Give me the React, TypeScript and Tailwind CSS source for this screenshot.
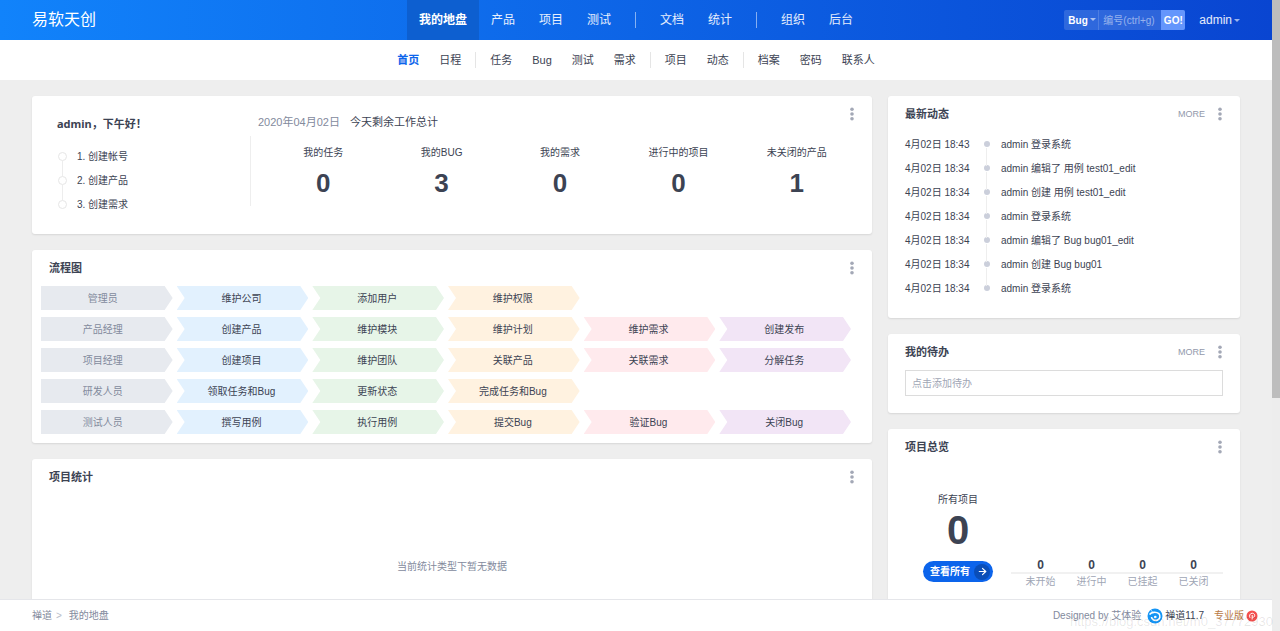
import { useState } from "react";
import type { ReactNode } from "react";
import { ArrowRight } from "lucide-react";
import clsx from "clsx";

const MAIN_NAV = [["我的地盘", "产品", "项目", "测试"], ["文档", "统计"], ["组织", "后台"]];
const SUB_NAV = [["首页", "日程"], ["任务", "Bug", "测试", "需求"], ["项目", "动态"], ["档案", "密码", "联系人"]];

const GUIDE = ["1. 创建帐号", "2. 创建产品", "3. 创建需求"];

const TOTALS = [
  { label: "我的任务", value: 0 },
  { label: "我的BUG", value: 3 },
  { label: "我的需求", value: 0 },
  { label: "进行中的项目", value: 0 },
  { label: "未关闭的产品", value: 1 },
];

const FLOW = [
  ["管理员", "维护公司", "添加用户", "维护权限"],
  ["产品经理", "创建产品", "维护模块", "维护计划", "维护需求", "创建发布"],
  ["项目经理", "创建项目", "维护团队", "关联产品", "关联需求", "分解任务"],
  ["研发人员", "领取任务和Bug", "更新状态", "完成任务和Bug"],
  ["测试人员", "撰写用例", "执行用例", "提交Bug", "验证Bug", "关闭Bug"],
];

const FLOW_COLORS = ["bg-[#e7eaef]", "bg-[#e2f1fe]", "bg-[#e7f5e8]", "bg-[#fff2e0]", "bg-[#ffeaed]", "bg-[#f2e5f6]"];

const ACTIVITY = [
  { time: "4月02日 18:43", text: "admin 登录系统" },
  { time: "4月02日 18:34", text: "admin 编辑了 用例 test01_edit" },
  { time: "4月02日 18:34", text: "admin 创建 用例 test01_edit" },
  { time: "4月02日 18:34", text: "admin 登录系统" },
  { time: "4月02日 18:34", text: "admin 编辑了 Bug bug01_edit" },
  { time: "4月02日 18:34", text: "admin 创建 Bug bug01" },
  { time: "4月02日 18:34", text: "admin 登录系统" },
];

const STATUS = ["未开始", "进行中", "已挂起", "已关闭"];

function Caret({ className }: { className?: string }) {
  return (
    <svg viewBox="0 0 6 3" className={clsx("h-[3px] w-[6px]", className)} fill="currentColor" aria-hidden="true">
      <path d="M0 0h6L3 3z" />
    </svg>
  );
}

function MoreButton() {
  return (
    <button type="button" aria-label="更多操作" className="flex h-4 w-2 items-center justify-center text-[#a3a8b6]">
      <svg viewBox="0 0 4 14" className="h-[14px] w-1" fill="currentColor">
        <circle cx="2" cy="2.2" r="1.8" />
        <circle cx="2" cy="7" r="1.8" />
        <circle cx="2" cy="11.8" r="1.8" />
      </svg>
    </button>
  );
}

function ZentaoLogo() {
  return (
    <svg viewBox="0 0 16 16" className="size-4" fill="none" aria-hidden="true">
      <circle cx="8" cy="8" r="7.5" fill="#1595f5" />
      <path d="M2.500 6.500c2-2.500 6.500-3 9.500-.8 1.800 2.400 1 5.600-1.800 6.500-3 .8-5.400-.8-5.700-3.200" stroke="#fff" strokeWidth="1.600" />
      <circle cx="8.300" cy="9" r="1.300" fill="#fff" />
      <path d="M4.200 2.600l1.400 1.200" stroke="#fff" strokeWidth="1" />
    </svg>
  );
}

function ProBadge() {
  return (
    <svg viewBox="0 0 12 12" className="size-3" aria-hidden="true">
      <circle cx="6" cy="6" r="5.500" fill="#f4504f" />
      <path d="M4 7.800C2.800 6 4 3.200 6.200 3.200c2 0 3 1.800 2.200 3.300-.6 1-1.800 1-2.200.3V5M6.200 6.800v2.700" fill="none" stroke="#fff" strokeWidth="1" />
    </svg>
  );
}

function Card({ title, more, className, children }: {
  title?: string;
  more?: boolean;
  className?: string;
  children: ReactNode;
}) {
  return (
    <section className={clsx("rounded-[3px] bg-white shadow-[0_1px_2px_rgba(0,0,0,0.1)]", className)}>
      {title && (
        <header className="flex h-9 items-center justify-between pr-4 pl-[17px]">
          <h2 className="text-[11px] leading-4 font-bold">{title}</h2>
          <div className="flex items-center gap-[11px]">
            {more && <a href="#" className="text-[9px] leading-4 text-[#9299ab]">MORE</a>}
            <MoreButton />
          </div>
        </header>
      )}
      {children}
    </section>
  );
}

function TopBar() {
  const [type, setType] = useState("Bug");
  return (
    <header className="grid h-10 shrink-0 grid-cols-[1fr_auto_1fr] items-center bg-linear-to-r/srgb from-[#1183fb] to-[#0945d1] px-8 text-white">
      <h1 className="text-[16px] leading-6">易软天创</h1>
      <nav aria-label="主导航" className="flex h-10 items-center text-[12px]">
        {MAIN_NAV.map((group, g) => (
          <div key={g} className="flex h-full items-center">
            {g > 0 && <span className="mx-3 h-4 w-px bg-white/50" />}
            {group.map((item) => (
              <a
                key={item}
                href="#"
                className={clsx("flex h-full items-center px-3", item === "我的地盘" ? "bg-[#0d5fd0] font-bold" : "text-white/90")}
              >
                {item}
              </a>
            ))}
          </div>
        ))}
      </nav>
      <div className="flex items-center justify-end gap-[14px]">
        <form className="flex h-5 overflow-hidden rounded-xs bg-white/15 text-[10px]" onSubmit={(e) => e.preventDefault()}>
          <div className="relative flex border-r border-white/15">
            <select
              aria-label="搜索类型"
              value={type}
              onChange={(e) => setType(e.target.value)}
              className="w-[34px] appearance-none pl-1 font-bold text-white outline-none"
            >
              <option>Bug</option>
              <option>任务</option>
              <option>需求</option>
            </select>
            <Caret className="pointer-events-none absolute top-2 right-[2px] text-white/60" />
          </div>
          <input aria-label="编号" placeholder="编号(ctrl+g)" className="w-[62px] px-1 outline-none placeholder:text-white/50" />
          <button type="submit" className="w-6 bg-[#6496fc] font-bold">GO!</button>
        </form>
        <button type="button" className="flex items-center gap-[2px] text-[12px] text-white/90">
          admin
          <Caret className="text-white/60" />
        </button>
      </div>
    </header>
  );
}

function SubBar() {
  return (
    <nav aria-label="二级导航" className="flex h-10 shrink-0 items-center justify-center bg-white text-[11px]">
      {SUB_NAV.map((group, g) => (
        <div key={g} className="flex items-center">
          {g > 0 && <span className="mx-1 h-4 w-px bg-[#e5e5e5]" />}
          {group.map((item) => (
            <a key={item} href="#" className={clsx("px-[10px]", item === "首页" && "font-bold text-[#0c64eb]")}>
              {item}
            </a>
          ))}
        </div>
      ))}
    </nav>
  );
}

function Welcome() {
  return (
    <Card className="flex pr-4 pb-[18px]">
      <div className="w-[218px] pt-5 pl-[25px]">
        <h2 className="font-['Noto_Sans','Noto_Sans_CJK_SC',sans-serif] text-[11px] leading-4 font-bold">admin，下午好！</h2>
        <ol className="mt-3">
          {GUIDE.map((step, i) => (
            <li key={step} className="relative flex h-6 items-center gap-[10px] pl-px text-[10px]">
              {i > 0 && <span className="absolute -top-2 left-[5px] h-4 w-px bg-[#ededed]" />}
              <span className="size-[9px] rounded-full border border-[#e6e6e6] bg-white" />
              <a href="#">{step}</a>
            </li>
          ))}
        </ol>
      </div>
      <div className="flex-1">
        <div className="flex justify-between pt-[10px] pl-2">
          <p className="pt-2 text-[11px] leading-4">
            <span className="mr-[10px] text-[#838a9d]">2020年04月02日</span>
            今天剩余工作总计
          </p>
          <MoreButton />
        </div>
        <dl className="mt-[6px] grid h-[70px] grid-cols-5 border-l border-[#eeeeee] pl-[13px] text-center">
          {TOTALS.map((t) => (
            <div key={t.label}>
              <dt className="pt-[9px] text-[10px] leading-4">{t.label}</dt>
              <dd className="mt-[6px] text-[26px] leading-8 font-bold">{t.value}</dd>
            </div>
          ))}
        </dl>
      </div>
    </Card>
  );
}

function Flowchart() {
  return (
    <Card title="流程图">
      <div className="flex flex-col gap-[7px] pr-[21px] pb-[9px] pl-[9px]">
        {FLOW.map((row) => (
          <div key={row[0]} className="grid grid-cols-6 gap-1 text-[10px]">
            {row.map((cell, i) => (
              <a
                key={cell}
                href="#"
                className={clsx(
                  "flex h-6 items-center justify-center",
                  FLOW_COLORS[i],
                  i === 0
                    ? "pr-2 text-[#838a9d] [clip-path:polygon(0_0,calc(100%-8px)_0,100%_50%,calc(100%-8px)_100%,0_100%)]"
                    : "pr-[2px] [clip-path:polygon(0_0,calc(100%-8px)_0,100%_50%,calc(100%-8px)_100%,0_100%,8px_50%)]",
                )}
              >
                {cell}
              </a>
            ))}
          </div>
        ))}
      </div>
    </Card>
  );
}

function Activity() {
  return (
    <Card title="最新动态" more>
      <ul className="px-[17px] pb-[18px]">
        {ACTIVITY.map((a, i) => (
          <li key={i} className="relative flex h-6 items-center text-[10px]">
            <time className="w-[79px]">{a.time}</time>
            {i > 0 && <span className="absolute -top-2 left-[81px] h-[18px] w-px bg-[#eeeeee]" />}
            <span className="size-[6px] rounded-full bg-[#cbcfdb]" />
            <a href="#" className="ml-[11px]">{a.text}</a>
          </li>
        ))}
      </ul>
    </Card>
  );
}

function Todo() {
  return (
    <Card title="我的待办" more>
      <div className="px-[17px] pb-[17px]">
        <input
          aria-label="添加待办"
          placeholder="点击添加待办"
          className="block h-[26px] w-full border border-[#dcdcdc] px-[6px] text-[10px] outline-none placeholder:text-[#a0a6b5]"
        />
      </div>
    </Card>
  );
}

function Overview() {
  return (
    <Card title="项目总览">
      <div className="grid grid-cols-[1fr_2fr] items-end px-[17px] pt-[25px] pb-10">
        <div className="flex flex-col items-center pb-2">
          <span className="text-[10px] leading-5">所有项目</span>
          <span className="text-[40px] leading-10 font-bold">0</span>
          <a href="#" className="mt-[11px] flex h-[21px] items-center gap-1 rounded-full bg-[#0c64eb] pr-[3px] pl-[7px] text-[10px] font-bold text-white">
            查看所有
            <span className="flex size-4 items-center justify-center rounded-full bg-[#0a4eb8]">
              <ArrowRight size={11} strokeWidth={2.5} />
            </span>
          </a>
        </div>
        <div className="relative">
          <span className="absolute inset-x-0 top-[14px] h-[2px] bg-[#f1f1f1]" />
          <dl className="grid grid-cols-4 px-1 text-center">
            {STATUS.map((s) => (
              <div key={s} className="flex flex-col-reverse">
                <dt className="pt-[2px] text-[10px] leading-4 text-[#a0a6b5]">{s}</dt>
                <dd className="text-[12px] leading-[14px] font-bold">0</dd>
              </div>
            ))}
          </dl>
        </div>
      </div>
    </Card>
  );
}

function Footer() {
  return (
    <footer className="relative flex h-8 shrink-0 items-center justify-between border-t border-[#e5e6ea] bg-white pr-[14px] pl-8 text-[10px] text-[#838a9d]">
      <nav aria-label="当前位置" className="flex items-center">
        <a href="#">禅道</a>
        <span className="mr-[7px] ml-1 text-[#b8bcc8]">&gt;</span>
        <a href="#">我的地盘</a>
      </nav>
      <div className="flex items-center">
        <span>Designed by 艾体验</span>
        <a href="#" className="ml-[6px] flex items-center gap-[2px] text-[#3c4353]">
          <ZentaoLogo />
          禅道11.7
        </a>
        <a href="#" className="ml-[10px] flex items-center gap-[2px] text-[#b97a45]">
          专业版
          <ProBadge />
        </a>
      </div>
      <span className="pointer-events-none absolute -right-px bottom-0 text-[13px] text-black/10">
        https://blog.csdn.net/m0_37772930
      </span>
    </footer>
  );
}

export default function App() {
  return (
    <div className="flex h-screen bg-[#eeeeee] font-['Liberation_Sans','Noto_Sans_CJK_SC',sans-serif] text-[#3c4353]">
      <div className="flex min-w-0 flex-1 flex-col">
        <TopBar />
        <SubBar />
        <main className="flex min-h-0 flex-1 items-start gap-4 overflow-hidden px-8 pt-4">
          <div className="flex min-w-0 flex-1 flex-col gap-4">
            <Welcome />
            <Flowchart />
            <Card title="项目统计">
              <p className="pt-[62px] pb-32 text-center text-[10px] leading-5 text-[#838a9d]">当前统计类型下暂无数据</p>
            </Card>
          </div>
          <div className="flex w-[352px] shrink-0 flex-col gap-4">
            <Activity />
            <Todo />
            <Overview />
          </div>
        </main>
        <Footer />
      </div>
      <div className="w-2 shrink-0 bg-[#ededed]">
        <div className="h-[63%] bg-[#bdbdbd]" />
      </div>
    </div>
  );
}
